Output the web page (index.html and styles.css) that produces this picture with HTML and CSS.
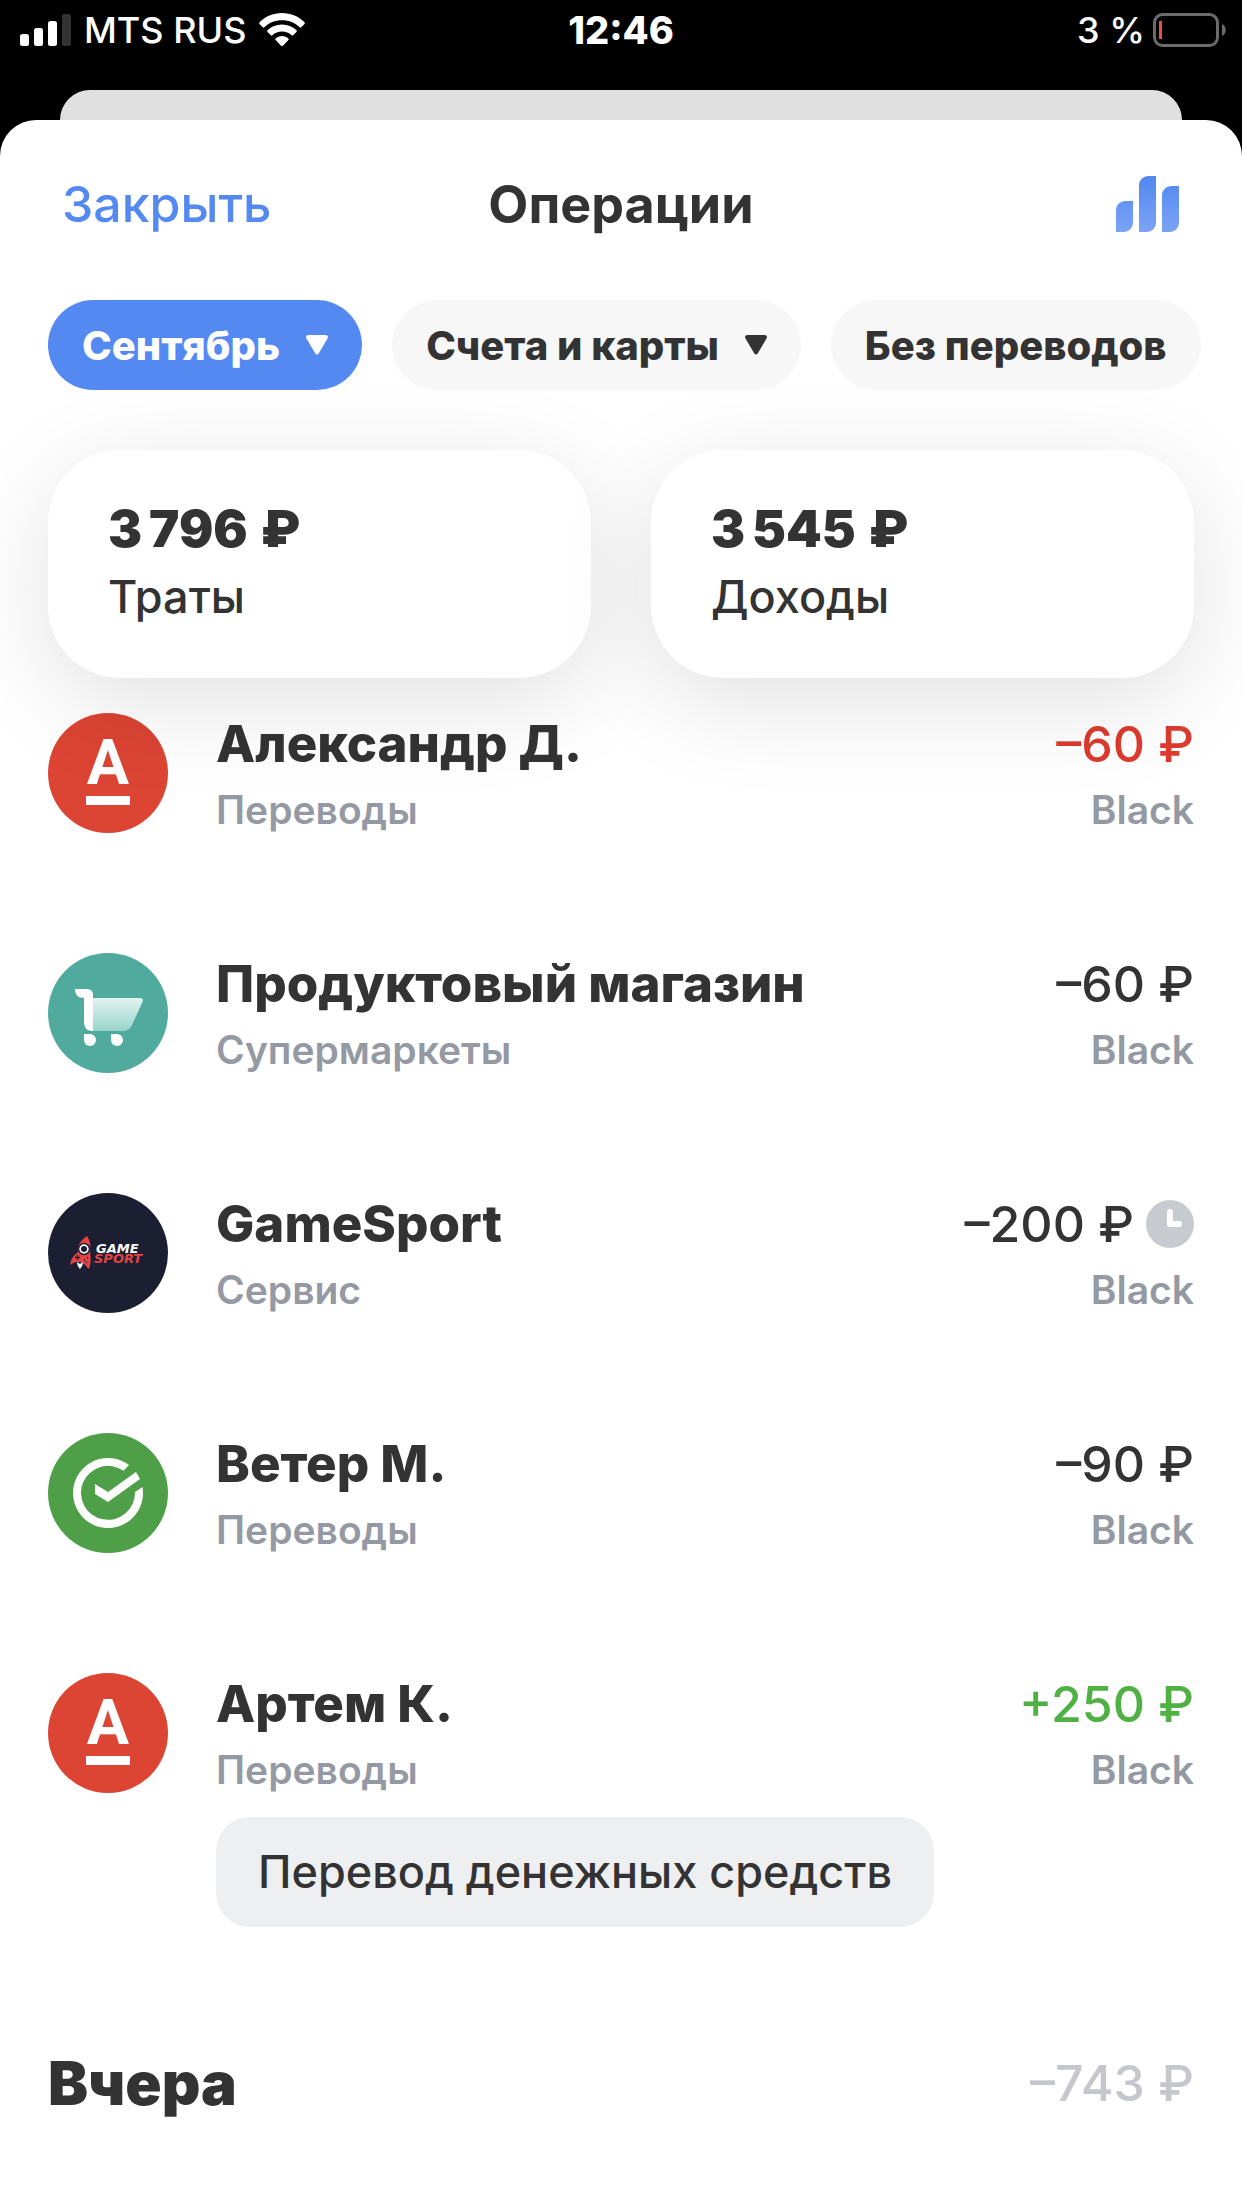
FILE: index.html
```
<!DOCTYPE html>
<html lang="ru">
<head>
  <meta charset="UTF-8">
  <meta name="viewport" content="width=device-width, initial-scale=1.0">
  <title>Операции</title>
  <link rel="stylesheet" href="styles.css">
</head>
<body>
  <div class="status-bar">
    <div class="status-left">
      <svg class="signal" viewBox="0 0 51 32" aria-hidden="true">
        <rect x="0" y="20" width="9" height="12" rx="2.5"/>
        <rect x="14" y="14" width="9" height="18" rx="2.5"/>
        <rect x="28" y="7" width="9" height="25" rx="2.5"/>
        <rect x="42" y="0" width="9" height="32" rx="2.5" fill="#333"/>
      </svg>
      <span>MTS RUS</span>
      <svg class="wifi" viewBox="0 0 46 34" aria-hidden="true">
        <path d="M23 0C32 0 40 3.500 45.500 9.300q.7.800 0 1.600L42.300 14.200q-.8.700-1.600 0C36 9.700 29.900 7.200 23 7.200S10 9.700 5.300 14.200q-.8.700-1.600 0L.5 10.900q-.7-.8 0-1.600C6 3.500 14 0 23 0z"/>
        <path d="M23 11.500c5.600 0 10.700 2.200 14.500 5.800q.7.800 0 1.600l-3.300 3.300q-.8.700-1.600 0C30 19.900 26.700 18.600 23 18.600s-7 1.300-9.600 3.600q-.8.700-1.600 0l-3.300-3.300q-.7-.8 0-1.600C12.300 13.700 17.400 11.500 23 11.500z"/>
        <path d="M23 23c2.500 0 4.700.9 6.400 2.400q.8.800 0 1.600l-5.500 5.800q-.9.800-1.800 0L16.600 27q-.8-.8 0-1.600C18.300 23.900 20.500 23 23 23z"/>
      </svg>
    </div>
    <span class="time">12:46</span>
    <div class="status-right">
      <span>3 %</span>
      <svg class="battery" viewBox="0 0 73 34" aria-hidden="true">
        <rect x="1.500" y="1.500" width="63" height="31" rx="8" fill="none" stroke="#6b6b6b" stroke-width="3"/>
        <rect x="6" y="8" width="3" height="18" fill="#eb4e3d"/>
        <path d="M69 11c5 2 5 10 0 12z" fill="#6b6b6b"/>
      </svg>
    </div>
  </div>

  <div class="back-sheet"></div>

  <main class="sheet">
    <header class="header">
      <button class="close" type="button">Закрыть</button>
      <h1>Операции</h1>
      <button class="stats" type="button" aria-label="Статистика">
        <svg viewBox="0 0 64 56" aria-hidden="true">
          <defs>
            <linearGradient id="bars" gradientUnits="userSpaceOnUse" x1="0" y1="0" x2="0" y2="56">
              <stop offset="0" stop-color="#5287f1"/>
              <stop offset="1" stop-color="#7ba3f4"/>
            </linearGradient>
          </defs>
          <g fill="url(#bars)">
            <path d="M0 56V34a9 9 0 0 1 9-9h8v22a9 9 0 0 1-9 9z"/>
            <path d="M23 56V9a9 9 0 0 1 9-9h8v47a9 9 0 0 1-9 9z"/>
            <path d="M46 56V19a9 9 0 0 1 9-9h8v37a9 9 0 0 1-9 9z"/>
          </g>
        </svg>
      </button>
    </header>

    <div class="filters">
      <button class="filter active" type="button">Сентябрь
        <svg viewBox="0 0 22 20" aria-hidden="true"><path d="M2 0h18q3 1 1.500 3.500L13 18q-2 3-4 0L.5 3.500Q-1 1 2 0z"/></svg>
      </button>
      <button class="filter" type="button">Счета и карты
        <svg viewBox="0 0 22 20" aria-hidden="true"><path d="M2 0h18q3 1 1.500 3.500L13 18q-2 3-4 0L.5 3.500Q-1 1 2 0z"/></svg>
      </button>
      <button class="filter" type="button">Без переводов</button>
    </div>

    <div class="totals">
      <div class="total">
        <strong>3&#8201;796&#8197;₽</strong>
        <span>Траты</span>
      </div>
      <div class="total">
        <strong>3&#8201;545&#8197;₽</strong>
        <span>Доходы</span>
      </div>
    </div>

    <ul class="operations">
      <li class="operation">
        <svg class="logo" viewBox="0 0 120 120" aria-hidden="true">
          <circle cx="60" cy="60" r="60" fill="#dc4433"/>
          <text class="logo-a" x="60" y="71" text-anchor="middle">A</text>
          <rect x="38" y="83" width="44" height="9" fill="#fff"/>
        </svg>
        <div class="info">
          <h2>Александр Д.</h2>
          <p>Переводы</p>
        </div>
        <div class="sum">
          <span class="amount out">–60 ₽</span>
          <p>Black</p>
        </div>
      </li>

      <li class="operation">
        <svg class="logo" viewBox="0 0 120 120" aria-hidden="true">
          <defs>
            <linearGradient id="cart" x1="0" y1="0" x2="0" y2="1">
              <stop offset="0" stop-color="#e3f3f0"/>
              <stop offset="1" stop-color="#98d4cd"/>
            </linearGradient>
          </defs>
          <circle cx="60" cy="60" r="60" fill="#50aa9e"/>
          <path d="M45 45h47q4 0 2.500 4L84 72q-3 6-9 6H45z" fill="url(#cart)"/>
          <g fill="#fff">
            <path d="M27 36h12q6 0 6 6v36q-9 0-9-9V45q-9 0-9-9z"/>
            <path d="M36 81h6a6 6 0 1 1-6 6z"/>
            <path d="M63 81h6a6 6 0 1 1-6 6z"/>
          </g>
        </svg>
        <div class="info">
          <h2>Продуктовый магазин</h2>
          <p>Супермаркеты</p>
        </div>
        <div class="sum">
          <span class="amount">–60 ₽</span>
          <p>Black</p>
        </div>
      </li>

      <li class="operation">
        <svg class="logo" viewBox="0 0 120 120" aria-hidden="true">
          <circle cx="60" cy="60" r="60" fill="#1b1f31"/>
          <path d="M39 43c3 4 4 9 3 15 1 7 1 13-1 18-2-1-3-4-5-5-4-3-8-3-14 1 1-6 3-9 8-13-1-7 3-12 9-16z" fill="#e14444"/>
          <circle cx="36" cy="56" r="5.500" fill="#fff" stroke="#1b1f31" stroke-width="1.500"/>
          <circle cx="36" cy="56" r="3" fill="#1b1f31"/>
          <path d="M27 64.500h5M29.500 62v5M36 67h1M39 65h1M38 69h1" stroke="#1b1f31" stroke-width="1.400"/>
          <path d="M29 69l3 2 3-2q0 4-3 7-3-3-3-7z" fill="#fff"/>
          <text class="logo-game"><tspan x="48" y="60">GAME</tspan><tspan class="logo-sport" x="46" y="70">SPORT</tspan></text>
        </svg>
        <div class="info">
          <h2>GameSport</h2>
          <p>Сервис</p>
        </div>
        <div class="sum">
          <span class="amount">–200 ₽
            <svg class="clock" viewBox="0 0 48 48" aria-hidden="true">
              <circle cx="24" cy="24" r="24" fill="#c7cacf"/>
              <path d="M24 12v12h9" fill="none" stroke="#fff" stroke-width="6" stroke-linecap="round" stroke-linejoin="round"/>
            </svg>
          </span>
          <p>Black</p>
        </div>
      </li>

      <li class="operation">
        <svg class="logo" viewBox="0 0 120 120" aria-hidden="true">
          <circle cx="60" cy="60" r="60" fill="#4e9f47"/>
          <path d="M81 32A35 35 0 1 0 94.500 54L87 59A27 27 0 1 1 75.500 37.700z" fill="#fff"/>
          <path d="M47 51l13 8 28-20 4 7-32 23-13-8z" fill="#fff"/>
        </svg>
        <div class="info">
          <h2>Ветер М.</h2>
          <p>Переводы</p>
        </div>
        <div class="sum">
          <span class="amount">–90 ₽</span>
          <p>Black</p>
        </div>
      </li>

      <li class="operation">
        <svg class="logo" viewBox="0 0 120 120" aria-hidden="true">
          <circle cx="60" cy="60" r="60" fill="#dc4433"/>
          <text class="logo-a" x="60" y="71" text-anchor="middle">A</text>
          <rect x="38" y="83" width="44" height="9" fill="#fff"/>
        </svg>
        <div class="info">
          <h2>Артем К.</h2>
          <p>Переводы</p>
        </div>
        <div class="sum">
          <span class="amount in">+250 ₽</span>
          <p>Black</p>
        </div>
        <div class="comment">Перевод денежных средств</div>
      </li>
    </ul>

    <div class="day">
      <h2>Вчера</h2>
      <span>–743 ₽</span>
    </div>
  </main>
</body>
</html>
```

FILE: styles.css
```
* {
  box-sizing: border-box;
}
body {
  margin: 0;
  min-height: 100vh;
  display: flex;
  flex-direction: column;
  background: #000;
  color: #333;
  font-family: Inter, "Noto Sans", sans-serif;
}
h1, h2, p, ul {
  margin: 0;
  padding: 0;
}
button {
  border: none;
  padding: 0;
  background: none;
  font-family: inherit;
  color: inherit;
  cursor: pointer;
}
svg {
  display: block;
  flex: none;
}

/* status bar */
.status-bar {
  display: grid;
  grid-template-columns: 1fr auto 1fr;
  align-items: center;
  height: 60px;
  margin-bottom: 30px;
  padding: 0 16px;
  color: #fff;
  font-size: 36px;
  font-weight: 500;
}
.status-left, .status-right {
  display: flex;
  align-items: center;
}
.status-left {
  gap: 13px;
  padding-left: 4px;
}
.status-right {
  justify-content: flex-end;
  gap: 8px;
}
.signal {
  width: 51px;
  height: 32px;
  fill: #fff;
}
.wifi {
  width: 46px;
  height: 34px;
  fill: #fff;
}
.battery {
  width: 73px;
  height: 34px;
}
.time {
  font-size: 38px;
  font-weight: 800;
}

/* sheet */
.back-sheet {
  height: 30px;
  margin: 0 60px;
  border-radius: 30px 30px 0 0;
  background: #e0e0e0;
}
.sheet {
  flex: 1;
  border-radius: 36px 36px 0 0;
  background: #fff;
  overflow: hidden;
}
.header {
  display: grid;
  grid-template-columns: 1fr auto 1fr;
  align-items: center;
  height: 180px;
  padding: 0 62px 12px;
}
.header h1 {
  font-size: 52px;
  font-weight: 700;
}
.close {
  justify-self: start;
  color: #5589f2;
  font-size: 50px;
  font-weight: 500;
}
.stats {
  justify-self: end;
}
.stats svg {
  width: 64px;
  height: 56px;
}

/* filters */
.filters {
  position: relative;
  z-index: 2;
  display: flex;
  gap: 30px;
  padding-left: 48px;
}
.filter {
  display: flex;
  flex: none;
  align-items: center;
  gap: 26px;
  height: 90px;
  padding: 0 34px;
  border-radius: 45px;
  background: #f7f7f7;
  font-size: 40px;
  font-weight: 800;
  white-space: nowrap;
}
.filter svg {
  width: 22px;
  height: 20px;
  fill: currentColor;
}
.filter.active {
  background: #5589f2;
  color: #fff;
}

/* totals */
.totals {
  position: relative;
  z-index: 1;
  display: grid;
  grid-template-columns: 1fr 1fr;
  gap: 60px;
  padding: 60px 48px 0;
  pointer-events: none;
}
.total {
  display: flex;
  flex-direction: column;
  gap: 8px;
  padding: 49px 60px 51px;
  border-radius: 72px;
  background: #fff;
  box-shadow: 0 24px 100px rgba(0, 0, 0, 0.12);
}
.total strong {
  font-size: 51px;
  line-height: 60px;
  font-weight: 900;
}
.total span {
  font-size: 45px;
  line-height: 60px;
  font-weight: 500;
}

/* operations */
.operations {
  display: flex;
  flex-direction: column;
  gap: 120px;
  padding: 35px 48px 0;
  list-style: none;
}
.operation {
  display: grid;
  grid-template-columns: 120px 1fr auto;
  column-gap: 48px;
}
.logo {
  width: 120px;
  height: 120px;
}
.info, .sum {
  display: flex;
  flex-direction: column;
  gap: 12px;
}
.info h2 {
  font-size: 51px;
  line-height: 62px;
  font-weight: 800;
}
.info p, .sum p {
  color: #9499a3;
  font-size: 39px;
  line-height: 46px;
  font-weight: 600;
}
.sum {
  align-items: flex-end;
}
.amount {
  display: flex;
  align-items: center;
  gap: 12px;
  font-size: 50px;
  line-height: 62px;
  font-weight: 500;
}
.amount.out {
  color: #dd3b2e;
}
.amount.in {
  color: #4fb043;
}
.clock {
  width: 48px;
  height: 48px;
}
.comment {
  grid-column: 2 / -1;
  justify-self: start;
  margin-top: 24px;
  padding: 24px 42px;
  border-radius: 34px;
  background: #eeeff1;
  font-size: 45px;
  line-height: 62px;
  font-weight: 500;
}

/* text inside the logos */
.logo-a {
  fill: #fff;
  font-family: Roboto, sans-serif;
  font-size: 63px;
  font-weight: 700;
}
.logo-game {
  fill: #fff;
  font-family: "DejaVu Sans", sans-serif;
  font-size: 13px;
  font-style: italic;
  font-weight: 700;
}
.logo-sport {
  fill: #e14444;
}

.day {
  display: flex;
  align-items: center;
  justify-content: space-between;
  padding: 120px 48px 48px;
}
.day h2 {
  font-size: 60px;
  line-height: 72px;
  font-weight: 900;
}
.day span {
  color: #c6c7cc;
  font-size: 50px;
  line-height: 62px;
  font-weight: 500;
}
```
